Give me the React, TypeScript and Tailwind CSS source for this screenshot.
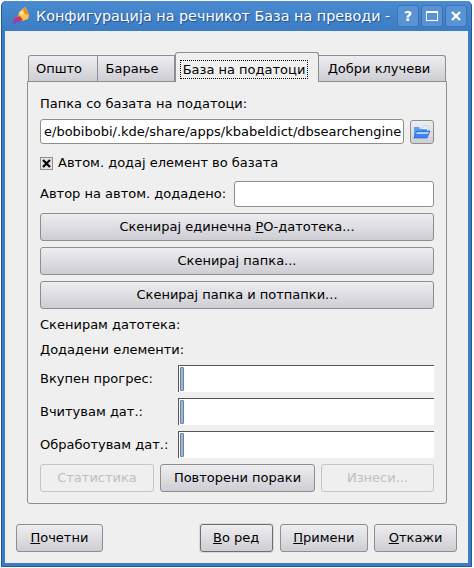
const FONT = "font-['DejaVu_Sans','Noto_Sans',sans-serif]";

function AppIcon() {
  return (
    <svg width="20" height="20" viewBox="0 0 20 20" aria-hidden className="shrink-0">
      <path d="M8 6 L14 1 L16 4 L18 9 L17 13 L11 15 L7 12 Z" fill="#f7c648" />
      <path d="M14 1 L16 4 L18 9 L14 8 L12 4 Z" fill="#ee8a2e" />
      <path d="M2 13 L9 10 L12 14 L5 17 Z" fill="#e0304c" />
      <path d="M1 15 L8 13 L9 15 L3 18 Z" fill="#8a45b8" />
      <path d="M9 6 L12 5 L13 8 L10 9 Z" fill="#fdeeb0" />
    </svg>
  );
}

function FolderIcon() {
  return (
    <svg width="18" height="16" viewBox="0 0 18 16" aria-hidden>
      <path d="M7 6 L13 1 L16 7 L12 9 Z" fill="#f2f5fb" stroke="#a9bbd6" strokeWidth="0.5" />
      <path d="M1 3 H6 L7 5 H14 V14 H1 Z" fill="#5aa0f0" />
      <path d="M1 14 L4 7 H17 L14 14 Z" fill="#3f86f4" stroke="#1c4fc4" strokeWidth="0.6" />
      <path d="M4 8 H16 L15 10 H3 Z" fill="#a8d4ff" />
    </svg>
  );
}

function TitleButton({ children }: { children: React.ReactNode }) {
  return (
    <div className="flex h-[22px] w-[22px] items-center justify-center rounded-[3px] border border-[#3a74b8] bg-[#5a93d4]">
      {children}
    </div>
  );
}

function PushButton({
  children,
  className = "",
  disabled = false,
  isDefault = false,
}: {
  children: React.ReactNode;
  className?: string;
  disabled?: boolean;
  isDefault?: boolean;
}) {
  const look = disabled
    ? "border-[#c4c4c4] bg-[#efefef] text-[#c0c0c0]"
    : isDefault
      ? "border-[#6f6f6f] bg-gradient-to-b from-[#eeeef1] to-[#cdcdd4] text-black shadow-[0_0_0_1px_#d8d8d8]"
      : "border-[#8e8e8e] bg-gradient-to-b from-[#eeeef1] to-[#cdcdd4] text-black";
  return (
    <div className={`flex h-[28px] items-center justify-center rounded-[3px] border text-[13px] ${look} ${className}`}>
      {children}
    </div>
  );
}

function Tab({
  label,
  active = false,
  className = "",
}: {
  label: string;
  active?: boolean;
  className?: string;
}) {
  if (active) {
    return (
      <div className={`relative z-10 -mb-px flex h-[30px] items-center justify-center rounded-t-[3px] border border-b-0 border-[#8e8e8e] bg-[#efefef] pt-[3px] pr-[6px] ${className}`}>
        <span className="border border-dotted border-black px-[2px] leading-[17px]">{label}</span>
      </div>
    );
  }
  return (
    <div className={`flex h-[26px] items-center justify-center border border-b-0 border-[#8e8e8e] bg-gradient-to-b from-[#eeeef1] to-[#cdcdd4] ${className}`}>
      {label}
    </div>
  );
}

function ProgressRow({ label }: { label: string }) {
  return (
    <div className="flex h-[27px] items-center">
      <span className="w-[138px] shrink-0 whitespace-nowrap">{label}</span>
      <div className="flex h-[27px] flex-1 border-t border-l border-[#555555] bg-white pt-[1px] pl-[1px]">
        <div className="mb-[1px] w-[4px] rounded-[1px] border border-[#6b7f9c] bg-[#9db8dc]" />
      </div>
    </div>
  );
}

export default function App() {
  return (
    <div className={`h-[568px] w-[474px] overflow-hidden bg-white pt-[1px] pl-[1px] text-black ${FONT}`}>
      <div className="flex h-[566px] w-[471px] flex-col rounded-t-[5px] border-x border-b border-[#1f5a9e] bg-[#3b7cc4]">
        {/* title bar */}
        <div className="flex h-[30px] shrink-0 items-center rounded-t-[5px] bg-gradient-to-b from-[#4a8ad0] to-[#3b7cc4] pr-[4px] pl-[9px] text-white">
          <AppIcon />
          <span className="ml-[5px] flex-1 text-[14.35px] leading-none whitespace-nowrap [text-shadow:1px_1px_1px_#1f4f8a]">
            Конфигурација на речникот База на преводи -
          </span>
          <div className="flex gap-[2px]">
            <TitleButton>
              <span className="text-[14px] leading-none font-bold">?</span>
            </TitleButton>
            <TitleButton>
              <span className="h-[10px] w-[12px] border border-t-2 border-white" />
            </TitleButton>
            <TitleButton>
              <svg width="12" height="12" viewBox="0 0 12 12" aria-hidden>
                <path d="M2 2 L10 10 M10 2 L2 10" stroke="white" strokeWidth="2.4" />
              </svg>
            </TitleButton>
          </div>
        </div>

        {/* client area */}
        <div className="mx-[3px] mb-[3px] flex flex-1 flex-col bg-[#efefef] px-[11px] pt-[21px] pb-[11px] text-[13px]">
          <div className="ml-[12px] flex items-end">
            <Tab label="Општо" className="w-[70px] rounded-tl-[3px] pr-[8px]" />
            <Tab label="Барање" className="w-[77px] border-l-0 pr-[8px]" />
            <Tab label="База на податоци" active className="w-[144px]" />
            <Tab label="Добри клучеви" className="w-[127px] rounded-tr-[3px] border-l-0 pr-[6px]" />
          </div>

          <div className="ml-[11px] flex h-[423px] w-[420px] flex-col rounded-b-[3px] border border-[#8e8e8e] bg-[#efefef] px-[12px] pt-[13px]">
            <div className="h-[18px] leading-[18px]">Папка со базата на податоци:</div>
            <div className="mt-[6px] flex items-center">
              <div className="flex h-[25px] w-[364px] items-center overflow-hidden rounded-[3px] border border-[#8e8e8e] bg-white px-[3px] whitespace-nowrap">
                e/bobibobi/.kde/share/apps/kbabeldict/dbsearchengine
              </div>
              <div className="ml-[6px] flex h-[24px] w-[24px] items-center justify-center rounded-[3px] border border-[#8e8e8e] bg-gradient-to-b from-[#eeeef1] to-[#cdcdd4]">
                <FolderIcon />
              </div>
            </div>
            <div className="mt-[12px] flex h-[14px] items-center">
              <div className="flex h-[13px] w-[13px] items-center justify-center border border-[#8e8e8e] bg-[#e4e4e4]">
                <svg width="9" height="9" viewBox="0 0 9 9" aria-hidden>
                  <path d="M1 1 L8 8 M8 1 L1 8" stroke="black" strokeWidth="2.2" />
                </svg>
              </div>
              <span className="ml-[5px]">Автом. додај елемент во базата</span>
            </div>
            <div className="mt-[11px] flex h-[26px] items-center">
              <span className="w-[194px] shrink-0 whitespace-nowrap">Автор на автом. додадено:</span>
              <div className="h-[26px] flex-1 rounded-[3px] border border-[#8e8e8e] bg-white" />
            </div>
            <div className="mt-[6px] flex flex-col gap-[6px]">
              <PushButton>
                <span>
                  Скенирај единечна <u>Р</u>О-датотека...
                </span>
              </PushButton>
              <PushButton>Скенирај папка...</PushButton>
              <PushButton>Скенирај папка и потпапки...</PushButton>
            </div>
            <div className="mt-[7px] h-[18px] leading-[18px]">Скенирам датотека:</div>
            <div className="mt-[7px] h-[18px] leading-[18px]">Додадени елементи:</div>
            <div className="mt-[6px] flex flex-col gap-[6px]">
              <ProgressRow label="Вкупен прогрес:" />
              <ProgressRow label="Вчитувам дат.:" />
              <ProgressRow label="Обработувам дат.:" />
            </div>
            <div className="mt-[6px] flex gap-[6px]">
              <PushButton disabled className="w-[114px]">Статистика</PushButton>
              <PushButton className="w-[155px]">Повторени пораки</PushButton>
              <PushButton disabled className="flex-1">Изнеси...</PushButton>
            </div>
          </div>

          <div className="mt-[20px] flex">
            <PushButton className="w-[87px]">
              <span><u>П</u>очетни</span>
            </PushButton>
            <PushButton isDefault className="ml-[97px] w-[73px]">
              <span><u>В</u>о ред</span>
            </PushButton>
            <PushButton className="ml-[7px] w-[89px]">
              <span><u>П</u>римени</span>
            </PushButton>
            <PushButton className="ml-[6px] w-[83px]">
              <span><u>О</u>ткажи</span>
            </PushButton>
          </div>
        </div>
      </div>
    </div>
  );
}
